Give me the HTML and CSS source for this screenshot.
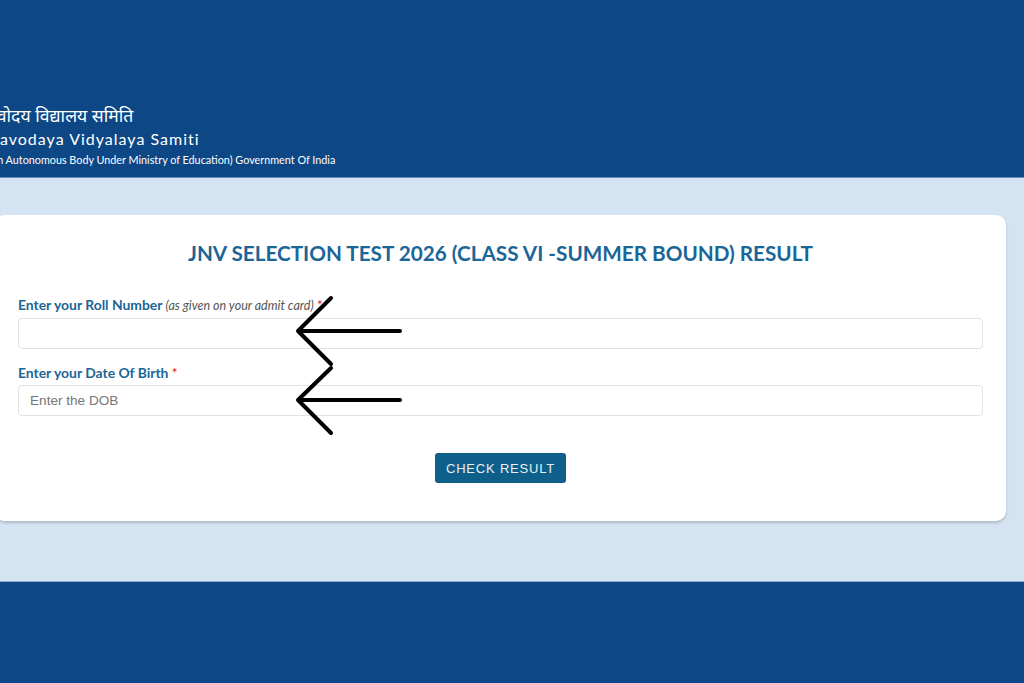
FILE: index.html
```html
<!DOCTYPE html>
<html lang="en">
<head>
<meta charset="utf-8">
<title>JNV Selection Test 2026 Result</title>
<link rel="stylesheet" href="styles.css">
</head>
<body>
<header class="site-header">
  <div class="brand">
    <div class="brand-hi">नवोदय विद्यालय समिति</div>
    <div class="brand-en">Navodaya Vidyalaya Samiti</div>
    <div class="brand-sub">(An Autonomous Body Under Ministry of Education) Government Of India</div>
  </div>
</header>
<main class="main">
  <section class="card">
    <h1 class="title">JNV SELECTION TEST 2026 (CLASS VI -SUMMER BOUND) RESULT</h1>
    <form class="form">
      <label class="label" for="roll">Enter your Roll Number <em class="hint">(as given on your admit card)</em> <span class="req">*</span></label>
      <input class="input" id="roll" type="text">
      <label class="label" for="dob">Enter your Date Of Birth <span class="req">*</span></label>
      <input class="input" id="dob" type="text" placeholder="Enter the DOB">
      <div class="actions"><button class="btn" type="button">CHECK RESULT</button></div>
    </form>
  </section>
</main>
<footer class="site-footer"></footer>
<svg class="arrows" width="1024" height="683" viewBox="0 0 1024 683" aria-hidden="true">
  <g fill="none" stroke="#000" stroke-width="4" stroke-linecap="round" stroke-linejoin="round">
    <path d="M331 298 L298 331 L331 364 M298 331 L400 331"/>
    <path d="M331 368 L298 400 L331 433 M298 400 L400 400"/>
  </g>
</svg>
</body>
</html>
```
FILE: styles.css
```css
* { box-sizing: border-box; }
html, body { margin: 0; padding: 0; }
body {
  width: 1024px;
  height: 683px;
  overflow: hidden;
  font-family: Lato, "Noto Sans", sans-serif;
  background: #0d4785;
  position: relative;
}
.site-header {
  height: 178px;
  background: #0d4785;
  border-bottom: 1px solid #6a8fbd;
  padding-top: 104px;
  color: #fff;
}
.brand { margin-left: -13px; }
.brand-hi {
  font-size: 17.6px;
  line-height: 24px;
  height: 24px;
}
.brand-en {
  font-size: 16px;
  line-height: 22px;
  letter-spacing: 1px;
}
.brand-sub {
  font-size: 10.8px;
  line-height: 20px;
}
.main {
  height: 404px;
  background: #d5e4f3;
  padding-top: 37px;
  border-bottom: 1px solid #8fa9cb;
}
.card {
  margin-left: -5px;
  width: 1011px;
  height: 306px;
  background: #fff;
  border-radius: 10px;
  box-shadow: 0 2px 3px rgba(0,0,0,0.18);
  padding: 26px 23px 0;
}
.title {
  margin: 0;
  text-align: center;
  color: #1b6597;
  font-size: 20.7px;
  font-weight: 700;
  line-height: 24px;
}
.form { display: flex; flex-direction: column; margin-top: 32px; }
.label {
  color: #1b6597;
  font-weight: 700;
  font-size: 13.9px;
  line-height: 16px;
  margin-bottom: 4px;
}
.hint {
  font-weight: 400;
  color: #555;
  font-size: 12.5px;
}
.req { color: #e02020; font-weight: 400; }
.input {
  height: 31px;
  border: 1px solid #e2e2e2;
  border-radius: 4px;
  padding: 0 11px;
  font-family: "Liberation Sans", Arial, sans-serif;
  font-size: 13.6px;
  color: #333;
  margin-bottom: 16px;
  background: #fff;
}
.input::placeholder { color: #777; }
.actions { display: flex; justify-content: center; margin-top: 21px; }
.btn {
  width: 131px;
  height: 30px;
  border: none;
  border-radius: 3px;
  background: #0e5f8a;
  color: #e8f0f6;
  font-family: "Liberation Sans", Arial, sans-serif;
  font-size: 13px;
  letter-spacing: 0.8px;
  padding: 0;
}
.site-footer { height: 100px; background: #0d4785; }
.arrows {
  position: absolute;
  left: 0;
  top: 0;
  pointer-events: none;
}
```
